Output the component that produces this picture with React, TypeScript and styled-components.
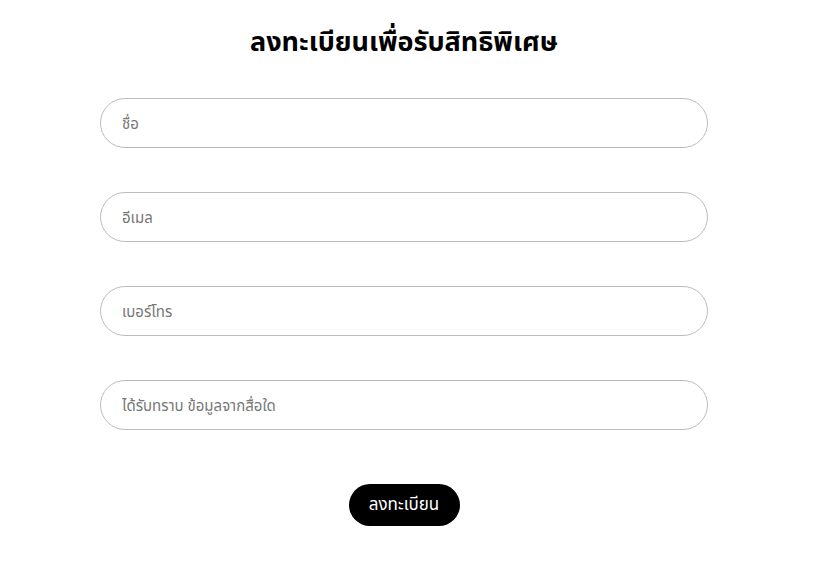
import React from "react";
import styled, { createGlobalStyle } from "styled-components";

const GlobalStyle = createGlobalStyle`
  html, body {
    margin: 0;
    padding: 0;
    background: #ffffff;
  }
  body {
    font-family: "Noto Sans", "Noto Sans Thai", "Liberation Sans", sans-serif;
    color: #000;
  }
`;

const Page = styled.div`
  width: 814px;
  height: 563px;
  box-sizing: border-box;
  padding: 23px 0 0 100px;
`;

const Form = styled.form`
  width: 608px;
  display: flex;
  flex-direction: column;
  align-items: center;
`;

const Title = styled.h2`
  margin: 0 0 39px;
  font-size: 27px;
  font-weight: 700;
  line-height: 36px;
  text-align: center;
`;

const Field = styled.input`
  width: 100%;
  height: 50px;
  box-sizing: border-box;
  border: 1px solid #bcbcbc;
  border-radius: 25px;
  padding: 0 21px;
  margin-bottom: 44px;
  font-family: inherit;
  font-size: 15px;
  color: #333;
  outline: none;

  &::placeholder {
    color: #777777;
  }
`;

const Submit = styled.button`
  margin-top: 10px;
  width: 111px;
  height: 42px;
  border: none;
  border-radius: 21px;
  background: #000;
  color: #fff;
  font-family: inherit;
  font-size: 17px;
  cursor: pointer;
`;

const fields = ["ชื่อ", "อีเมล", "เบอร์โทร", "ได้รับทราบ ข้อมูลจากสื่อใด"];

const App = () => {
  return (
    <>
      <GlobalStyle />
      <Page>
        <Form onSubmit={(e) => e.preventDefault()}>
          <Title>ลงทะเบียนเพื่อรับสิทธิพิเศษ</Title>
          {fields.map((f) => (
            <Field key={f} placeholder={f} />
          ))}
          <Submit type="submit">ลงทะเบียน</Submit>
        </Form>
      </Page>
    </>
  );
};

export default App;
